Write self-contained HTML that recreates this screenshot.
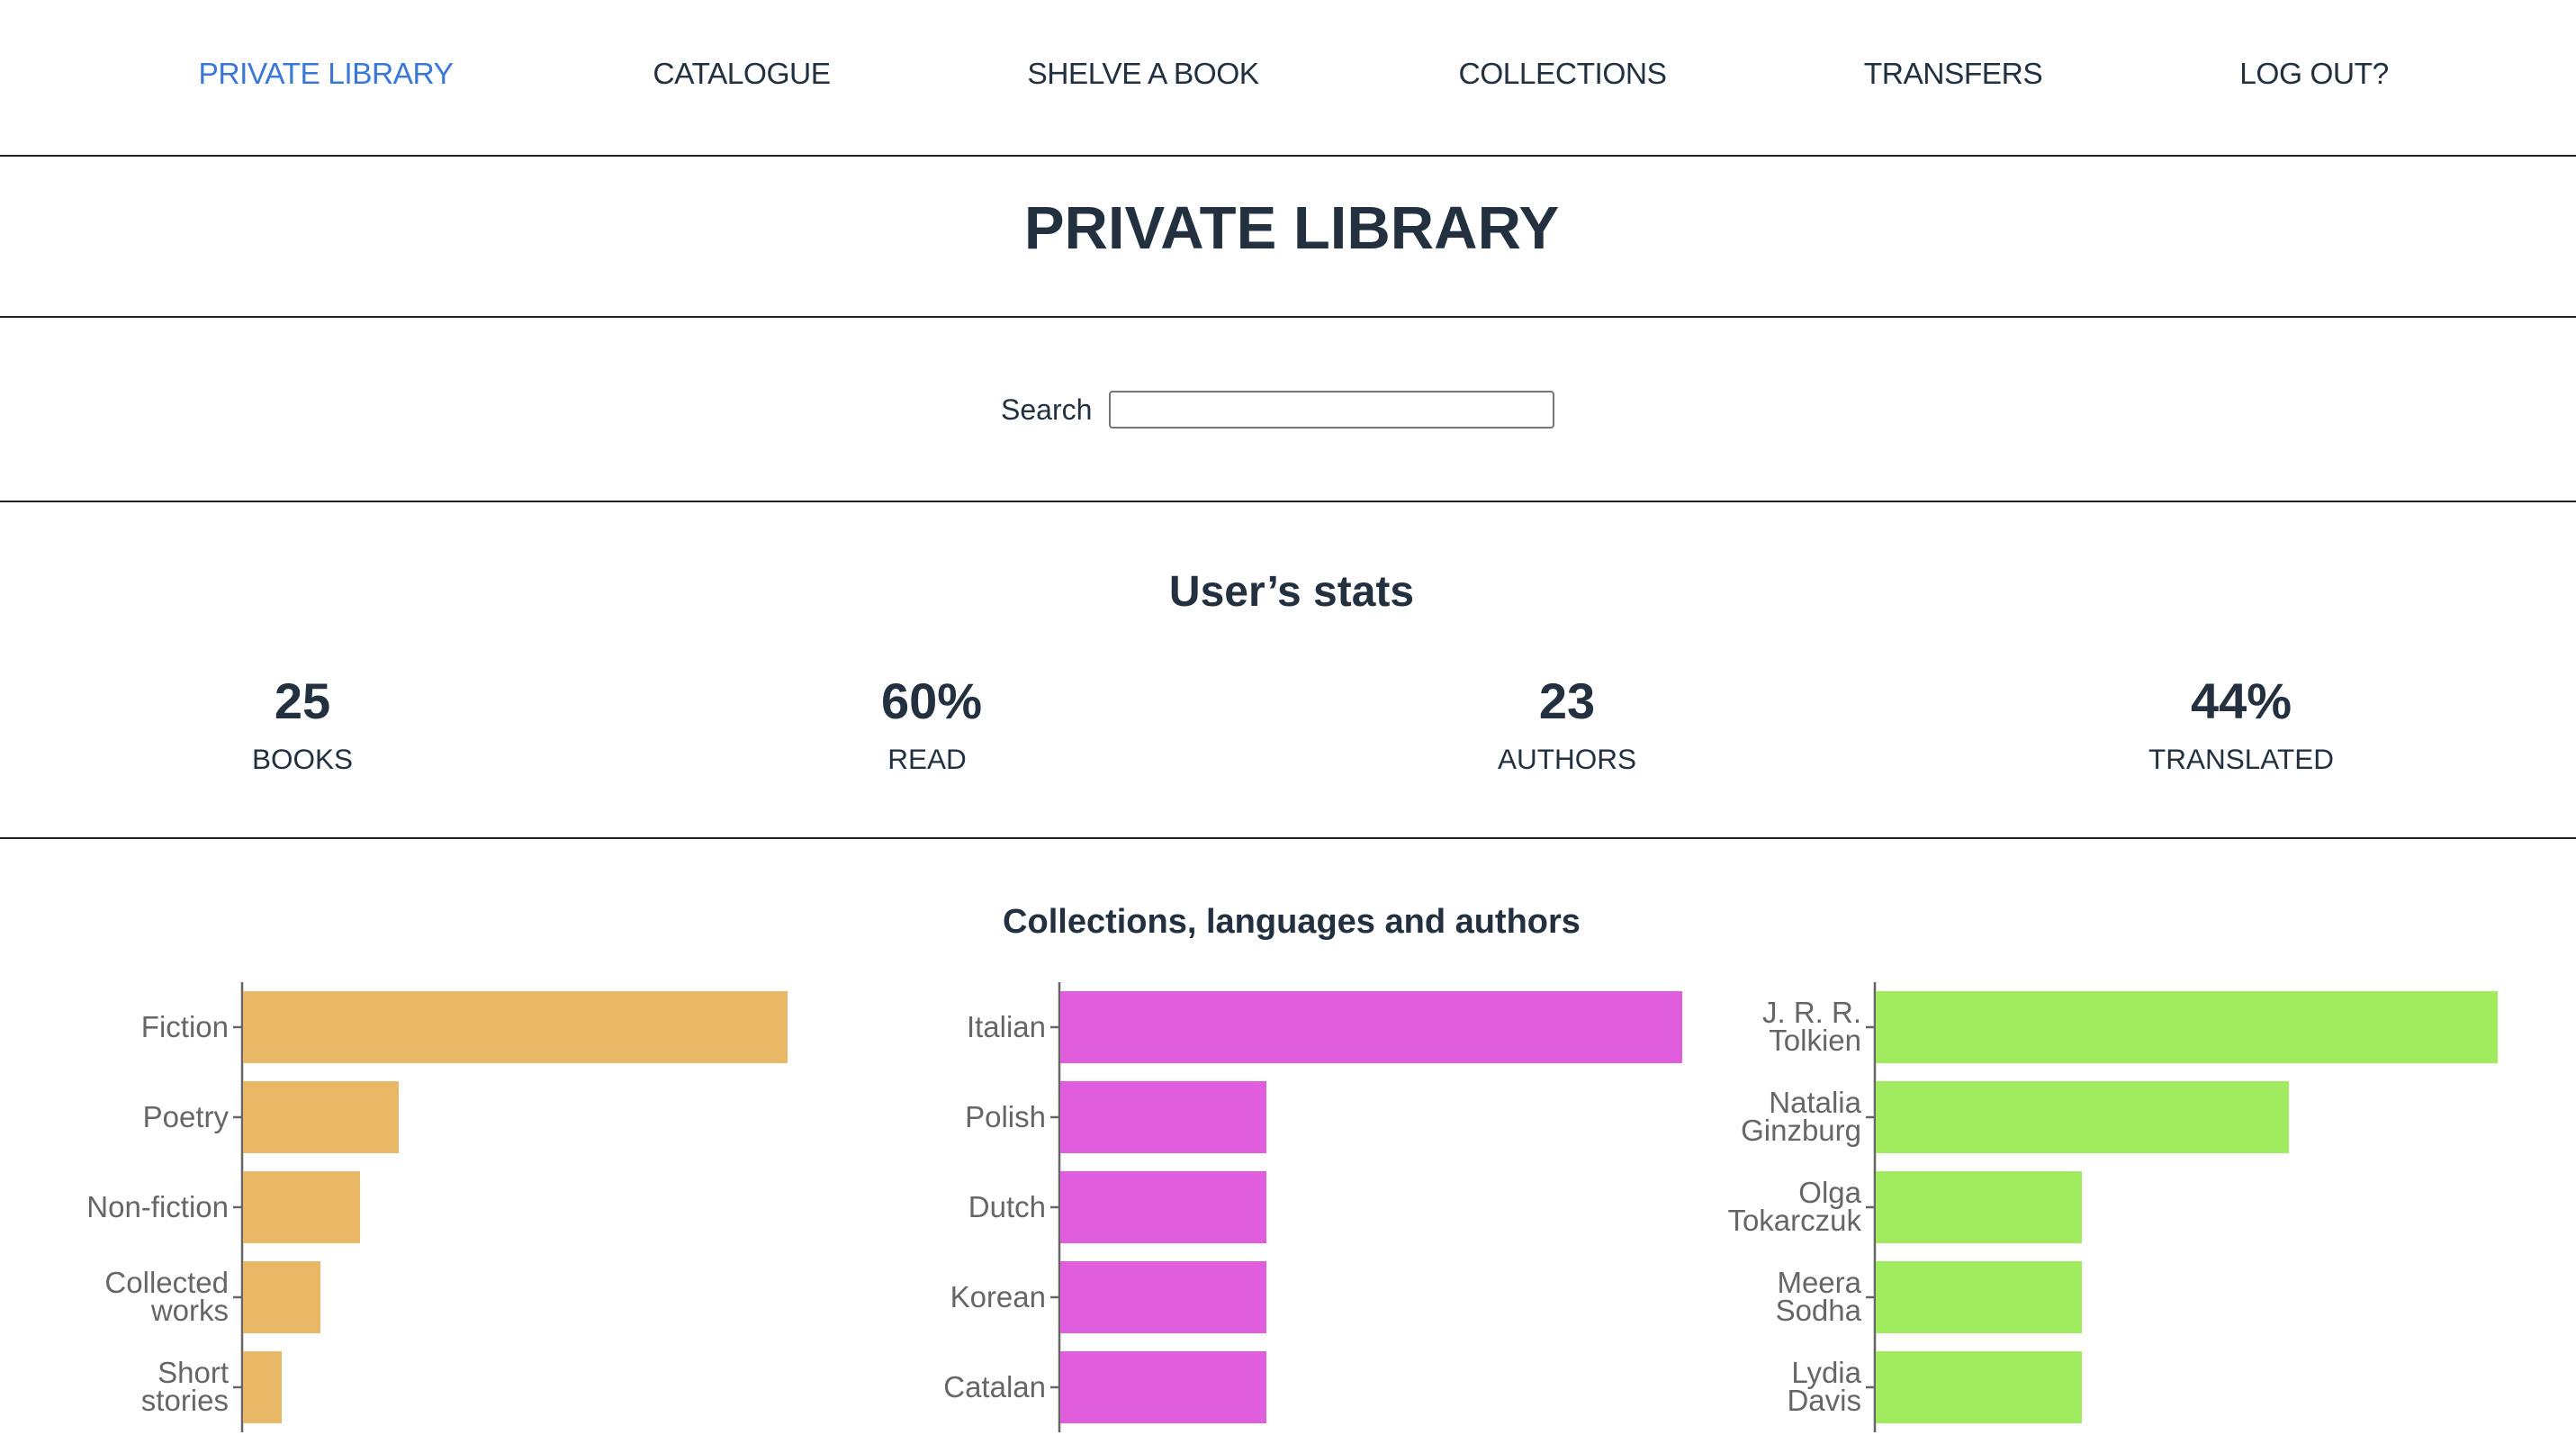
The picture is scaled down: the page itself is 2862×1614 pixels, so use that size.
<!DOCTYPE html>
<html><head><meta charset="utf-8"><style>
html,body{margin:0;padding:0;background:#fff;width:2862px;height:1614px;overflow:hidden;font-family:"Liberation Sans",sans-serif;color:#22303f}
.a{position:absolute;white-space:nowrap}
.nav{top:64px;font-size:33.5px;transform:translateX(-50%);letter-spacing:-0.5px}
.hr{position:absolute;left:0;width:2862px;height:2px;background:#222}
.num{top:746px;font-size:56px;font-weight:bold;transform:translateX(-50%)}
.lab{top:825px;font-size:31.5px;transform:translateX(-50%)}
</style></head><body>
<div class="a nav" style="left:362px;color:#3a78d8">PRIVATE LIBRARY</div>
<div class="a nav" style="left:824px">CATALOGUE</div>
<div class="a nav" style="left:1270px">SHELVE A BOOK</div>
<div class="a nav" style="left:1736px">COLLECTIONS</div>
<div class="a nav" style="left:2170px">TRANSFERS</div>
<div class="a nav" style="left:2571px">LOG OUT?</div>
<div class="hr" style="top:172px"></div>
<div class="a" style="left:1435px;top:215px;font-size:67px;font-weight:bold;transform:translateX(-50%)">PRIVATE LIBRARY</div>
<div class="hr" style="top:351px"></div>
<div class="a" style="left:1112px;top:437px;font-size:32px">Search</div>
<div class="a" style="left:1232px;top:434px;width:491px;height:38px;border:2px solid #767676;border-radius:4px"></div>
<div class="hr" style="top:556px"></div>
<div class="a" style="left:1435px;top:630px;font-size:48px;font-weight:bold;transform:translateX(-50%)">User’s stats</div>
<div class="a num" style="left:336px">25</div>
<div class="a num" style="left:1035px">60%</div>
<div class="a num" style="left:1741px">23</div>
<div class="a num" style="left:2490px">44%</div>
<div class="a lab" style="left:336px">BOOKS</div>
<div class="a lab" style="left:1030px">READ</div>
<div class="a lab" style="left:1741px">AUTHORS</div>
<div class="a lab" style="left:2490px">TRANSLATED</div>
<div class="hr" style="top:930px"></div>
<div class="a" style="left:1435px;top:1003px;font-size:38px;font-weight:bold;transform:translateX(-50%)">Collections, languages and authors</div>
<svg class="a" style="left:0;top:0" width="2862" height="1614" font-family="Liberation Sans, sans-serif" font-size="33" fill="#666">
<g stroke="#666" stroke-width="2.5">
<line x1="269" y1="1091" x2="269" y2="1591"/><line x1="1177" y1="1091" x2="1177" y2="1591"/><line x1="2083" y1="1091" x2="2083" y2="1591"/>
<line x1="259" y1="1141" x2="269" y2="1141"/><line x1="259" y1="1241" x2="269" y2="1241"/><line x1="259" y1="1341" x2="269" y2="1341"/><line x1="259" y1="1441" x2="269" y2="1441"/><line x1="259" y1="1541" x2="269" y2="1541"/>
<line x1="1167" y1="1141" x2="1177" y2="1141"/><line x1="1167" y1="1241" x2="1177" y2="1241"/><line x1="1167" y1="1341" x2="1177" y2="1341"/><line x1="1167" y1="1441" x2="1177" y2="1441"/><line x1="1167" y1="1541" x2="1177" y2="1541"/>
<line x1="2073" y1="1141" x2="2083" y2="1141"/><line x1="2073" y1="1241" x2="2083" y2="1241"/><line x1="2073" y1="1341" x2="2083" y2="1341"/><line x1="2073" y1="1441" x2="2083" y2="1441"/><line x1="2073" y1="1541" x2="2083" y2="1541"/>
</g>
<g fill="#E9B866">
<rect x="270" y="1101" width="605" height="80"/><rect x="270" y="1201" width="173" height="80"/><rect x="270" y="1301" width="130" height="80"/><rect x="270" y="1401" width="86" height="80"/><rect x="270" y="1501" width="43" height="80"/>
</g>
<g fill="#E05EDD">
<rect x="1178" y="1101" width="691" height="80"/><rect x="1178" y="1201" width="229" height="80"/><rect x="1178" y="1301" width="229" height="80"/><rect x="1178" y="1401" width="229" height="80"/><rect x="1178" y="1501" width="229" height="80"/>
</g>
<g fill="#A0EB5E">
<rect x="2084" y="1101" width="691" height="80"/><rect x="2084" y="1201" width="459" height="80"/><rect x="2084" y="1301" width="229" height="80"/><rect x="2084" y="1401" width="229" height="80"/><rect x="2084" y="1501" width="229" height="80"/>
</g>
<g text-anchor="end">
<text x="254" y="1152">Fiction</text><text x="254" y="1252">Poetry</text><text x="254" y="1352">Non-fiction</text>
<text x="254" y="1436">Collected</text><text x="254" y="1467">works</text>
<text x="254" y="1536">Short</text><text x="254" y="1567">stories</text>
<text x="1162" y="1152">Italian</text><text x="1162" y="1252">Polish</text><text x="1162" y="1352">Dutch</text><text x="1162" y="1452">Korean</text><text x="1162" y="1552">Catalan</text>
<text x="2068" y="1136">J. R. R.</text><text x="2068" y="1167">Tolkien</text>
<text x="2068" y="1236">Natalia</text><text x="2068" y="1267">Ginzburg</text>
<text x="2068" y="1336">Olga</text><text x="2068" y="1367">Tokarczuk</text>
<text x="2068" y="1436">Meera</text><text x="2068" y="1467">Sodha</text>
<text x="2068" y="1536">Lydia</text><text x="2068" y="1567">Davis</text>
</g>
</svg>
</body></html>
